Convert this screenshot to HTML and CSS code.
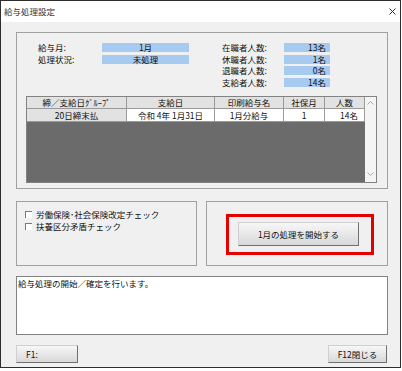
FILE: index.html
```html
<!DOCTYPE html>
<html lang="ja">
<head>
    <meta charset="UTF-8">
    <meta name="viewport" content="width=device-width, initial-scale=1.0">
    <title>給与処理設定</title>
    <link rel="stylesheet" href="styles.css">
</head>
<body>

<div class="window">
    <!-- Title bar -->
    <div class="titlebar">
        <span class="title">給与処理設定</span>
        <svg class="close" width="7" height="7" viewBox="0 0 7 7">
            <path d="M0.5 0.5 L6.5 6.5 M6.5 0.5 L0.5 6.5" stroke="#333" stroke-width="1"/>
        </svg>
    </div>

    <div class="content">
        <!-- Summary -->
        <div class="group summary">
            <div class="info">
                <div class="info-left">
                    <span class="lbl">給与月:</span><span class="field center">1月</span>
                    <span class="lbl">処理状況:</span><span class="field center">未処理</span>
                </div>
                <div class="info-right">
                    <span class="lbl">在職者人数:</span><span class="field right">13名</span>
                    <span class="lbl">休職者人数:</span><span class="field right">1名</span>
                    <span class="lbl">退職者人数:</span><span class="field right">0名</span>
                    <span class="lbl">支給者人数:</span><span class="field right">14名</span>
                </div>
            </div>

            <div class="grid">
                <div class="grid-main">
                    <div class="row head">
                        <span class="cell c1">締／支給日ｸﾞﾙｰﾌﾟ</span>
                        <span class="cell c2">支給日</span>
                        <span class="cell c3">印刷給与名</span>
                        <span class="cell c4">社保月</span>
                        <span class="cell c5">人数</span>
                    </div>
                    <div class="row data">
                        <span class="cell c1 fixed">20日締末払</span>
                        <span class="cell c2">令和 4年 1月31日</span>
                        <span class="cell c3">1月分給与</span>
                        <span class="cell c4">1</span>
                        <span class="cell c5 num">14名</span>
                    </div>
                    <div class="grid-empty"></div>
                </div>
                <div class="scrollbar">
                    <svg width="7" height="4" viewBox="0 0 7 4"><polyline points="0.5,3.5 3.5,0.5 6.5,3.5" fill="none" stroke="#a8a8a8"/></svg>
                    <svg width="7" height="4" viewBox="0 0 7 4"><polyline points="0.5,0.5 3.5,3.5 6.5,0.5" fill="none" stroke="#a8a8a8"/></svg>
                </div>
            </div>
        </div>

        <!-- Options / action -->
        <div class="options">
            <div class="group checks">
                <label class="check"><span class="box"></span>労働保険･社会保険改定チェック</label>
                <label class="check"><span class="box"></span>扶養区分矛盾チェック</label>
            </div>
            <div class="group action">
                <div class="highlight">
                    <button class="btn start">1月の処理を開始する</button>
                </div>
            </div>
        </div>

        <!-- Message -->
        <div class="message">給与処理の開始／確定を行います。</div>

        <!-- Function keys -->
        <div class="footer">
            <button class="btn fkey f1">F1:</button>
            <button class="btn fkey f12">F12閉じる</button>
        </div>
    </div>
</div>

</body>
</html>
```

FILE: styles.css
```css
* {
    box-sizing: border-box;
}

body {
    margin: 0;
    background: #fff;
    font-family: "Noto Sans CJK JP", sans-serif;
    font-size: 8.5px;
    color: #111;
}

.window {
    width: 401px;
    height: 368px;
    border: 1px solid #2e2e2e;
    display: flex;
    flex-direction: column;
}

.titlebar {
    height: 21px;
    background: #fff;
    display: flex;
    align-items: center;
    justify-content: space-between;
    padding: 0 4px 1px 3px;
}

.title {
    color: #333;
}

.content {
    flex: 1;
    background: #f0f0f0;
    padding: 10px 12px 0 15px;
}

.group {
    border: 1px solid #a0a0a0;
}

/* summary box */
.summary {
    height: 157px;
    padding: 10px 10px 0 9px;
}

.info {
    display: flex;
    margin-left: 12px;
    line-height: 9px;
}

.info-left,
.info-right {
    display: grid;
    grid-auto-rows: 9px;
    row-gap: 2.6px;
}

.info-left {
    grid-template-columns: 64px 87px;
}

.info-right {
    grid-template-columns: 62px 46px;
    margin-left: 33px;
}

.field {
    background: #a6caf0;
}

.field.center {
    text-align: center;
}

.field.right {
    text-align: right;
    padding-right: 4px;
}

/* data grid */
.grid {
    display: flex;
    height: 87px;
    margin-top: 9px;
    border: 1px solid #828282;
}

.grid-main {
    flex: 1;
    display: flex;
    flex-direction: column;
}

.row {
    display: flex;
}

.head {
    height: 12px;
    line-height: 11px;
}

.data {
    height: 13px;
    line-height: 12px;
}

.cell {
    border-right: 1px solid #9a9a9a;
    border-bottom: 1px solid #9a9a9a;
    text-align: center;
    background: #fff;
    white-space: nowrap;
    overflow: hidden;
}

.head .cell,
.cell.fixed {
    background: #e2e2e2;
}

.cell.num {
    text-align: right;
    padding-right: 6px;
}

.c1 { width: 100px; }
.c2 { width: 88px; }
.c3 { width: 69px; }
.c4 { width: 41px; }
.c5 { width: 40px; }

.grid-empty {
    flex: 1;
    background: #6b6b6b;
}

.scrollbar {
    width: 11px;
    background: #f4f4f4;
    display: flex;
    flex-direction: column;
    justify-content: space-between;
    align-items: center;
    padding: 4px 0 6px;
}

.scrollbar svg {
    display: block;
}

/* options */
.options {
    display: flex;
    gap: 9px;
    margin-top: 12px;
    height: 65px;
}

.checks {
    width: 181px;
    padding: 6px 0 0 8px;
}

.check {
    display: flex;
    align-items: center;
    height: 12px;
}

.box {
    width: 7px;
    height: 7px;
    margin-right: 4px;
    background: #fff;
    border-top: 1px solid #7a7a7a;
    border-left: 1px solid #7a7a7a;
}

.action {
    flex: 1;
    display: flex;
    align-items: center;
    justify-content: center;
    padding: 2px 0 0 6px;
}

.highlight {
    border: 3px solid #e50000;
    padding: 5px 12px 6px 9px;
}

.btn {
    font-family: inherit;
    font-size: 8.5px;
    color: #111;
    background: linear-gradient(#f7f7f7, #d8d8d8);
    border: 1px solid;
    border-color: #cfcfcf #707070 #707070 #cfcfcf;
    padding: 0;
    cursor: pointer;
}

.start {
    width: 121px;
    height: 24px;
    display: block;
}

/* message */
.message {
    margin-top: 10px;
    height: 59px;
    background: #fff;
    border: 1px solid #828282;
    padding: 1px 1px;
    line-height: 11px;
}

/* function keys */
.footer {
    display: flex;
    justify-content: space-between;
    margin-top: 10px;
    padding-right: 1px;
}

.fkey {
    height: 18px;
}

.f1 {
    width: 62px;
    text-align: left;
    padding-left: 9px;
}

.f12 {
    width: 59px;
}
```
